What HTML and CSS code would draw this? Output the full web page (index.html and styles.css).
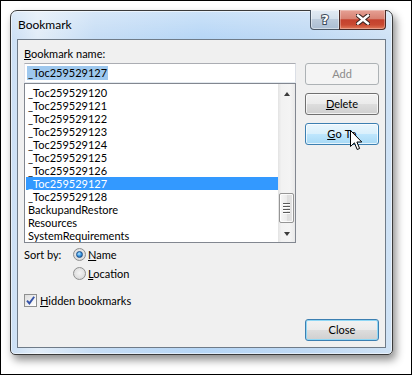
FILE: index.html
```html
<!DOCTYPE html>
<html lang="en">
<head>
    <meta charset="UTF-8">
    <title>Bookmark</title>
    <link rel="stylesheet" href="styles.css">
</head>
<body>
    <div class="shot">
        <div class="window">
            <div class="titlebar">
                <div class="title">Bookmark</div>
                <div class="cap help"><span class="q">?</span></div>
                <div class="cap close">
                    <svg width="14" height="11" viewBox="0 0 14 11">
                        <path d="M2 1.5 L12 9.5 M12 1.5 L2 9.5" stroke="#3b2420" stroke-width="4.6" stroke-linecap="square"/>
                        <path d="M2 1.5 L12 9.5 M12 1.5 L2 9.5" stroke="#fff" stroke-width="2.4" stroke-linecap="square"/>
                    </svg>
                </div>
            </div>

            <div class="client">
                <div class="field-label"><u>B</u>ookmark name:</div>

                <div class="main">
                    <div class="left">
                        <div class="textbox"><span class="sel">_Toc259529127</span></div>
                        <div class="listbox">
                            <div class="items">
                                <div class="item">_Toc259529120</div>
                                <div class="item">_Toc259529121</div>
                                <div class="item">_Toc259529122</div>
                                <div class="item">_Toc259529123</div>
                                <div class="item">_Toc259529124</div>
                                <div class="item">_Toc259529125</div>
                                <div class="item">_Toc259529126</div>
                                <div class="item selected">_Toc259529127</div>
                                <div class="item">_Toc259529128</div>
                                <div class="item">BackupandRestore</div>
                                <div class="item">Resources</div>
                                <div class="item">SystemRequirements</div>
                            </div>
                            <div class="scrollbar">
                                <div class="sb-btn"><span class="arrow up"></span></div>
                                <div class="sb-track">
                                    <div class="thumb">
                                        <span class="grip"></span>
                                        <span class="grip"></span>
                                        <span class="grip"></span>
                                        <span class="grip"></span>
                                    </div>
                                </div>
                                <div class="sb-btn"><span class="arrow down"></span></div>
                            </div>
                        </div>
                    </div>

                    <div class="buttons">
                        <div class="btn disabled">Add</div>
                        <div class="btn"><u>D</u>elete</div>
                        <div class="btn hover goto">
                            <u>G</u>o To
                            <svg class="cursor" width="13" height="21" viewBox="0 0 13 21">
                                <path d="M0.5 0.5 V16.5 L4.4 12.8 L7.2 19.5 L9.6 18.5 L6.9 12 H11.8 Z" fill="#fff" stroke="#000" stroke-width="1" stroke-linejoin="miter"/>
                            </svg>
                        </div>
                    </div>
                </div>

                <div class="opt-row first">
                    <span class="sort-label">Sort by:</span>
                    <span class="radio checked"><span class="dot"></span></span>
                    <span><u>N</u>ame</span>
                </div>
                <div class="opt-row indent">
                    <span class="radio"></span>
                    <span><u>L</u>ocation</span>
                </div>

                <div class="check-row">
                    <span class="checkbox">
                        <svg width="11" height="11" viewBox="0 0 11 11">
                            <path d="M2 5.6 L4.4 8.4 L9.2 1.8" fill="none" stroke="#3553a8" stroke-width="1.9"/>
                        </svg>
                    </span>
                    <span><u>H</u>idden bookmarks</span>
                </div>

                <div class="footer">
                    <div class="btn default">Close</div>
                </div>
            </div>
        </div>
    </div>
</body>
</html>
```

FILE: styles.css
```css
* {
    box-sizing: border-box;
    margin: 0;
    padding: 0;
}
body {
    font-family: Lato, "Noto Sans", sans-serif;
    font-size: 11px;
    color: #000;
    background: #fff;
}
u {
    text-decoration: underline;
    text-underline-offset: 1px;
}
.shot {
    width: 412px;
    height: 375px;
    border: 1px solid #000;
    padding: 9px;
    background: #fff;
}
.window {
    width: 383px;
    height: 345px;
    border: 1px solid #3a3a3a;
    border-radius: 7px 7px 5px 5px;
    padding: 0 6px 6px;
    display: flex;
    flex-direction: column;
    background:
        linear-gradient(180deg, rgba(255,255,255,0.3), rgba(255,255,255,0) 28px),
        linear-gradient(90deg, #cbdff4 0%, #e2edf8 7%, #c6ddf5 22%, #b6d6f6 50%, #bfd9f4 78%, #cfe2f5 100%);
    box-shadow: inset 0 0 0 1px rgba(255,255,255,0.55), 3px 5px 9px rgba(0,0,0,0.45);
}
.titlebar {
    height: 28px;
    display: flex;
    align-items: flex-start;
}
.title {
    flex: 1;
    padding-left: 1px;
    font-size: 12px;
    line-height: 28px;
}
.cap {
    height: 20px;
    margin-top: -1px;
    border: 1px solid #4a5766;
    border-top: none;
    display: flex;
    align-items: center;
    justify-content: center;
}
.help {
    width: 30px;
    border-radius: 0 0 0 4px;
    background: linear-gradient(#e3ebf4 0%, #d4e0ec 45%, #bccbdc 50%, #aabdd2 100%);
    box-shadow: inset 0 0 0 1px rgba(255,255,255,0.45);
}
.q {
    font-family: "DejaVu Sans", sans-serif;
    font-weight: bold;
    font-size: 13px;
    line-height: 14px;
    color: #fff;
    -webkit-text-stroke: 2px #3d4a5a;
    paint-order: stroke fill;
}
.close {
    width: 47px;
    margin-left: -1px;
    border-color: #4a2a26;
    border-radius: 0 0 4px 0;
    background: linear-gradient(#e6a195 0%, #d88273 45%, #c4412d 52%, #c94a32 78%, #e07a5b 100%);
    box-shadow: inset 0 0 0 1px rgba(255,255,255,0.3);
}
.client {
    flex: 1;
    border: 1px solid #6f7b88;
    background: #f0f0f0;
    padding: 7px 6px 6px;
    display: flex;
    flex-direction: column;
}
.field-label {
    line-height: 14px;
    margin-bottom: 2px;
}
.main {
    display: flex;
    gap: 9px;
}
.left {
    width: 272px;
}
.textbox {
    height: 20px;
    border: 1px solid #abadb3;
    border-left-color: #e2e3ea;
    border-right-color: #dbdfe6;
    border-bottom-color: #e3e9ef;
    background: #fff;
    padding: 2px 0 0 2px;
}
.sel {
    display: inline-block;
    background: #9ec8ee;
    line-height: 14px;
    padding: 0 1px;
}
.listbox {
    height: 160px;
    border: 1px solid #828790;
    background: #fff;
    display: flex;
    overflow: hidden;
}
.items {
    flex: 1;
    padding: 2px 0 0 1px;
}
.item {
    height: 13px;
    line-height: 13px;
    padding-left: 2px;
    white-space: nowrap;
}
.item.selected {
    background: #3399ff;
    color: #fff;
}
.scrollbar {
    width: 17px;
    display: flex;
    flex-direction: column;
    background: linear-gradient(90deg, #e3e3e3 0%, #f2f2f2 20%, #f4f4f4 70%, #e9e9e9 100%);
}
.sb-btn {
    height: 17px;
    display: flex;
    align-items: center;
    justify-content: center;
}
.arrow {
    width: 0;
    height: 0;
    border-left: 3.5px solid transparent;
    border-right: 3.5px solid transparent;
}
.arrow.up {
    border-bottom: 4px solid #3c3c3c;
    margin-top: 3px;
}
.arrow.down {
    border-top: 4px solid #3c3c3c;
}
.sb-track {
    flex: 1;
    display: flex;
    flex-direction: column;
    padding: 0 1px;
}
.thumb {
    margin-top: auto;
    margin-bottom: 2px;
    height: 30px;
    border: 1px solid #959595;
    border-radius: 2px;
    background: linear-gradient(90deg, #f7f7f7 0%, #ececec 50%, #dedede 55%, #e4e4e4 100%);
    box-shadow: inset 0 0 0 1px rgba(255,255,255,0.8);
    display: flex;
    flex-direction: column;
    align-items: center;
    justify-content: center;
    gap: 2px;
}
.grip {
    width: 7px;
    height: 1px;
    background: #5a5a5a;
    box-shadow: 0 1px 0 #fff;
}
.buttons {
    width: 74px;
    display: flex;
    flex-direction: column;
    gap: 8px;
}
.btn {
    height: 22px;
    width: 74px;
    line-height: 20px;
    text-align: center;
    border: 1px solid #707070;
    border-radius: 3px;
    background: linear-gradient(#f2f2f2 0%, #ebebeb 48%, #dddddd 52%, #cfcfcf 100%);
    box-shadow: inset 0 0 0 1px rgba(255,255,255,0.7);
}
.btn.disabled {
    border-color: #adb2b5;
    background: #f4f4f4;
    color: #8b8b8b;
    box-shadow: none;
}
.btn.hover {
    border-color: #3c7fb1;
    background: linear-gradient(#eaf6fd 0%, #d9f0fc 48%, #bee6fd 52%, #a7d9f5 100%);
}
.btn.default {
    border-color: #3c7fb1;
    box-shadow: inset 0 0 0 1px #8fd7f5;
}
.goto {
    position: relative;
    letter-spacing: 0.3px;
}
.cursor {
    position: absolute;
    left: 44px;
    top: 6px;
}
.opt-row {
    display: flex;
    align-items: center;
    height: 19px;
}
.opt-row.first {
    margin-top: 2px;
}
.indent {
    padding-left: 49px;
}
.sort-label {
    width: 49px;
}
.radio {
    width: 13px;
    height: 13px;
    margin-right: 2px;
    border-radius: 50%;
    border: 1px solid #8e8f8f;
    background: radial-gradient(circle at 50% 45%, #f4f4f4 0%, #e2e2e2 55%, #cfcfcf 100%);
    display: flex;
    align-items: center;
    justify-content: center;
}
.dot {
    width: 7px;
    height: 7px;
    border-radius: 50%;
    border: 1px solid #1c4f8a;
    background: radial-gradient(circle at 40% 35%, #bfe6ff 0%, #3f9ee6 45%, #0f4d92 100%);
}
.check-row {
    display: flex;
    align-items: center;
    height: 18px;
    margin-top: 8px;
}
.checkbox {
    width: 13px;
    height: 13px;
    margin-right: 3px;
    border: 1px solid #8e8f8f;
    background: linear-gradient(135deg, #dcdcdc 0%, #f6f6f6 70%, #ffffff 100%);
    display: flex;
    align-items: center;
    justify-content: center;
}
.footer {
    display: flex;
    justify-content: flex-end;
    margin-top: 10px;
}
```
